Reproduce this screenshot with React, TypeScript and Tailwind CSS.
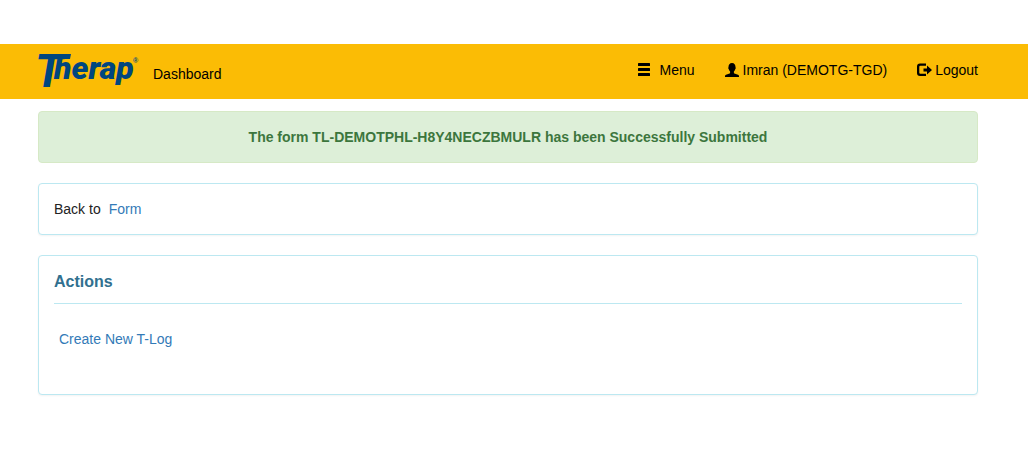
import type { ReactNode } from 'react'

const formId = 'TL-DEMOTPHL-H8Y4NECZBMULR'

function TherapLogo() {
  return (
    <svg width="100" height="40" viewBox="0 0 100 40" className="shrink-0 overflow-visible fill-[#00467f]" role="img" aria-label="Therap">
      <text x="-3" y="37" fontFamily="Roboto, sans-serif" fontSize="46" fontWeight="700" fontStyle="italic">
        T
      </text>
      {/* crossbar runs on to the right of the T */}
      <path d="M22 4h11l-1 5H21z" />
      <text x="16" y="29" fontFamily="Roboto, sans-serif" fontSize="32" fontWeight="900" fontStyle="italic">
        herap
      </text>
      <text x="95" y="13" fontFamily="Liberation Sans, sans-serif" fontSize="7" fontWeight="700">
        ®
      </text>
    </svg>
  )
}

function MenuIcon() {
  return (
    <svg width="14" height="14" viewBox="0 0 14 14" fill="currentColor" aria-hidden="true">
      <rect x="1" y="0" width="12" height="3" rx="0.5" />
      <rect x="1" y="5" width="12" height="3" rx="0.5" />
      <rect x="1" y="10" width="12" height="3" rx="0.5" />
    </svg>
  )
}

function UserIcon() {
  return (
    <svg width="14" height="14" viewBox="0 -1 14 14" fill="currentColor" aria-hidden="true">
      <path d="M7-1C4.700-1 3.500.8 3.500 3c0 .5-.3.6-.2 1.300.1.7.5.8.6 1.200.3 1 .7 1.600 1.200 2.100v1.200c0 .3-.2.500-.5.600L1 10.700c-.6.3-1 .8-1 1.400V13h14v-.9c0-.6-.4-1.100-1-1.400L9.400 9.400c-.3-.1-.5-.3-.5-.6V7.600c.5-.5.9-1.100 1.200-2.100.1-.4.5-.5.6-1.200.1-.7-.2-.8-.2-1.300C10.500.8 9.300-1 7-1z" />
    </svg>
  )
}

function LogoutIcon() {
  return (
    <svg width="15" height="14" viewBox="0 0 15 14" fill="currentColor" aria-hidden="true">
      <path d="M9 .5H3Q0 .5 0 3.500V10q0 3 3 3h6v-2.300H3.300q-1 0-1-1V3.800q0-1 1-1H9z" />
      <path d="M10 2.500v3H6.500v3H10v3L15 7z" />
    </svg>
  )
}

function Panel({ children }: { children: ReactNode }) {
  return (
    <section className="mb-5 rounded border border-[#bce8f1] bg-white px-[15px] shadow-xs">
      {children}
    </section>
  )
}

export default function App() {
  return (
    <div className="bg-white pt-11 font-['Liberation_Sans',Arial,sans-serif] text-sm leading-5 text-[#222]">
      <header className="flex items-start justify-between bg-[#fbbc05] pt-1.5 pr-[50px] pb-[9px] pl-[38px] text-black">
        <div className="flex items-center gap-[15px]">
          <a href="#home">
            <TherapLogo />
          </a>
          <a href="#dashboard" className="pt-2">Dashboard</a>
        </div>
        <nav className="flex items-center gap-[30px] pt-2.5">
          <button type="button" className="flex items-center gap-2">
            <MenuIcon />
            Menu
          </button>
          <a href="#profile" className="flex items-center gap-1">
            <UserIcon />
            Imran (DEMOTG-TGD)
          </a>
          <a href="#logout" className="flex items-center gap-[3px]">
            <LogoutIcon />
            Logout
          </a>
        </nav>
      </header>

      <main className="pt-3 pr-[50px] pl-[38px]">
        <div role="status" className="mb-5 rounded border border-[#d6e9c6] bg-[#ddefd8] p-[15px] text-center font-bold text-[#3c763d]">
          The form {formId} has been Successfully Submitted
        </div>

        <Panel>
          <div className="flex gap-2 py-[15px]">
            <span>Back to</span>
            <a href="#form" className="text-[#337ab7] hover:underline">Form</a>
          </div>
        </Panel>

        <Panel>
          <h2 className="border-b border-[#bce8f1] pt-4 pb-[11px] text-base leading-5 font-bold text-[#31708f]">
            Actions
          </h2>
          <div className="px-[5px] pt-[25px] pb-[45px]">
            <a href="#new-tlog" className="text-[#337ab7] hover:underline">Create New T-Log</a>
          </div>
        </Panel>
      </main>
    </div>
  )
}
